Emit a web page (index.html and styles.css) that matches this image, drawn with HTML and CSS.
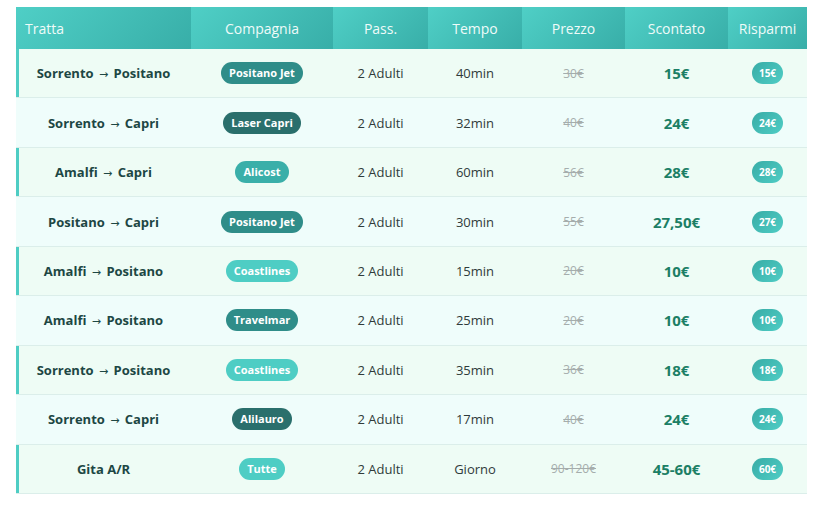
FILE: index.html
```html
<!DOCTYPE html>
<html lang="it">
<head>
<meta charset="utf-8">
<title>Tratte</title>
<link rel="stylesheet" href="styles.css">
</head>
<body>
<table class="fares">
  <colgroup>
    <col class="c-route"><col class="c-comp"><col class="c-pass"><col class="c-time"><col class="c-price"><col class="c-disc"><col class="c-save">
  </colgroup>
  <thead>
    <tr>
      <th class="left">Tratta</th><th>Compagnia</th><th>Pass.</th><th>Tempo</th><th>Prezzo</th><th>Scontato</th><th>Risparmi</th>
    </tr>
  </thead>
  <tbody>
    <tr class="odd"><td class="route">Sorrento <span class="arr">→</span> Positano</td><td><span class="co co-jet">Positano Jet</span></td><td>2 Adulti</td><td>40min</td><td class="old">30€</td><td class="disc">15€</td><td><span class="save">15€</span></td></tr>
    <tr><td class="route">Sorrento <span class="arr">→</span> Capri</td><td><span class="co co-laser">Laser Capri</span></td><td>2 Adulti</td><td>32min</td><td class="old">40€</td><td class="disc">24€</td><td><span class="save">24€</span></td></tr>
    <tr class="odd"><td class="route">Amalfi <span class="arr">→</span> Capri</td><td><span class="co co-alicost">Alicost</span></td><td>2 Adulti</td><td>60min</td><td class="old">56€</td><td class="disc">28€</td><td><span class="save">28€</span></td></tr>
    <tr><td class="route">Positano <span class="arr">→</span> Capri</td><td><span class="co co-jet">Positano Jet</span></td><td>2 Adulti</td><td>30min</td><td class="old">55€</td><td class="disc">27,50€</td><td><span class="save">27€</span></td></tr>
    <tr class="odd"><td class="route">Amalfi <span class="arr">→</span> Positano</td><td><span class="co co-coast">Coastlines</span></td><td>2 Adulti</td><td>15min</td><td class="old">20€</td><td class="disc">10€</td><td><span class="save">10€</span></td></tr>
    <tr><td class="route">Amalfi <span class="arr">→</span> Positano</td><td><span class="co co-jet">Travelmar</span></td><td>2 Adulti</td><td>25min</td><td class="old">20€</td><td class="disc">10€</td><td><span class="save">10€</span></td></tr>
    <tr class="odd"><td class="route">Sorrento <span class="arr">→</span> Positano</td><td><span class="co co-coast">Coastlines</span></td><td>2 Adulti</td><td>35min</td><td class="old">36€</td><td class="disc">18€</td><td><span class="save">18€</span></td></tr>
    <tr><td class="route">Sorrento <span class="arr">→</span> Capri</td><td><span class="co co-laser">Alilauro</span></td><td>2 Adulti</td><td>17min</td><td class="old">40€</td><td class="disc">24€</td><td><span class="save">24€</span></td></tr>
    <tr class="odd"><td class="route">Gita A/R</td><td><span class="co co-coast">Tutte</span></td><td>2 Adulti</td><td>Giorno</td><td class="old">90-120€</td><td class="disc">45-60€</td><td><span class="save">60€</span></td></tr>
  </tbody>
</table>
</body>
</html>
```
FILE: styles.css
```css
html, body {
  margin: 0;
  background: #ffffff;
}
body {
  padding: 7px 0 0 16px;
  font-family: "Open Sans", "Noto Sans", sans-serif;
}
.fares {
  border-collapse: separate;
  border-spacing: 0;
  width: 791px;
  table-layout: fixed;
}
.c-route { width: 175px; }
.c-comp { width: 142px; }
.c-pass { width: 95px; }
.c-time { width: 94px; }
.c-price { width: 103px; }
.c-disc { width: 103px; }
.c-save { width: 79px; }

.fares th {
  height: 42px;
  padding: 0;
  background: linear-gradient(135deg, #4fcfc6 0%, #38aea8 100%);
  color: #effbf9;
  font-size: 14px;
  font-weight: 500;
  text-align: center;
}
.fares th.left {
  text-align: left;
  padding-left: 9px;
}
.fares td {
  height: 48.44px;
  padding: 0;
  text-align: center;
  font-size: 13px;
  color: #2f3b3a;
  background: #effdfb;
  border-bottom: 1px solid #dbeeea;
}
.fares tr.odd td {
  background: #eefcf5;
}
.fares tr.odd td:first-child {
  box-shadow: inset 3px 0 0 #4ecdc4;
}
.fares td.route {
  font-weight: 700;
  color: #1d4744;
  font-size: 13px;
}
.arr {
  font-family: "DejaVu Sans", sans-serif;
  font-weight: 400;
  font-size: 11px;
  margin: 0 2px;
}
.fares td.old {
  color: #a5adac;
  text-decoration: line-through;
  font-size: 12px;
}
.fares td.disc {
  color: #1c7f65;
  font-weight: 700;
  font-size: 15px;
}
.co {
  display: inline-block;
  padding: 3px 8px;
  border-radius: 11px;
  color: #ffffff;
  font-size: 11px;
  font-weight: 700;
  line-height: 16px;
}
.co-jet { background: #2f8d89; }
.co-laser { background: #2a6f6c; }
.co-alicost { background: #3aafa9; }
.co-coast { background: #4ecdc4; }
.save {
  display: inline-block;
  padding: 3px 7px;
  border-radius: 11px;
  background: linear-gradient(135deg, #38aca6 0%, #4fcdc5 100%);
  color: #ffffff;
  font-size: 10px;
  font-weight: 700;
  line-height: 16px;
}
```
